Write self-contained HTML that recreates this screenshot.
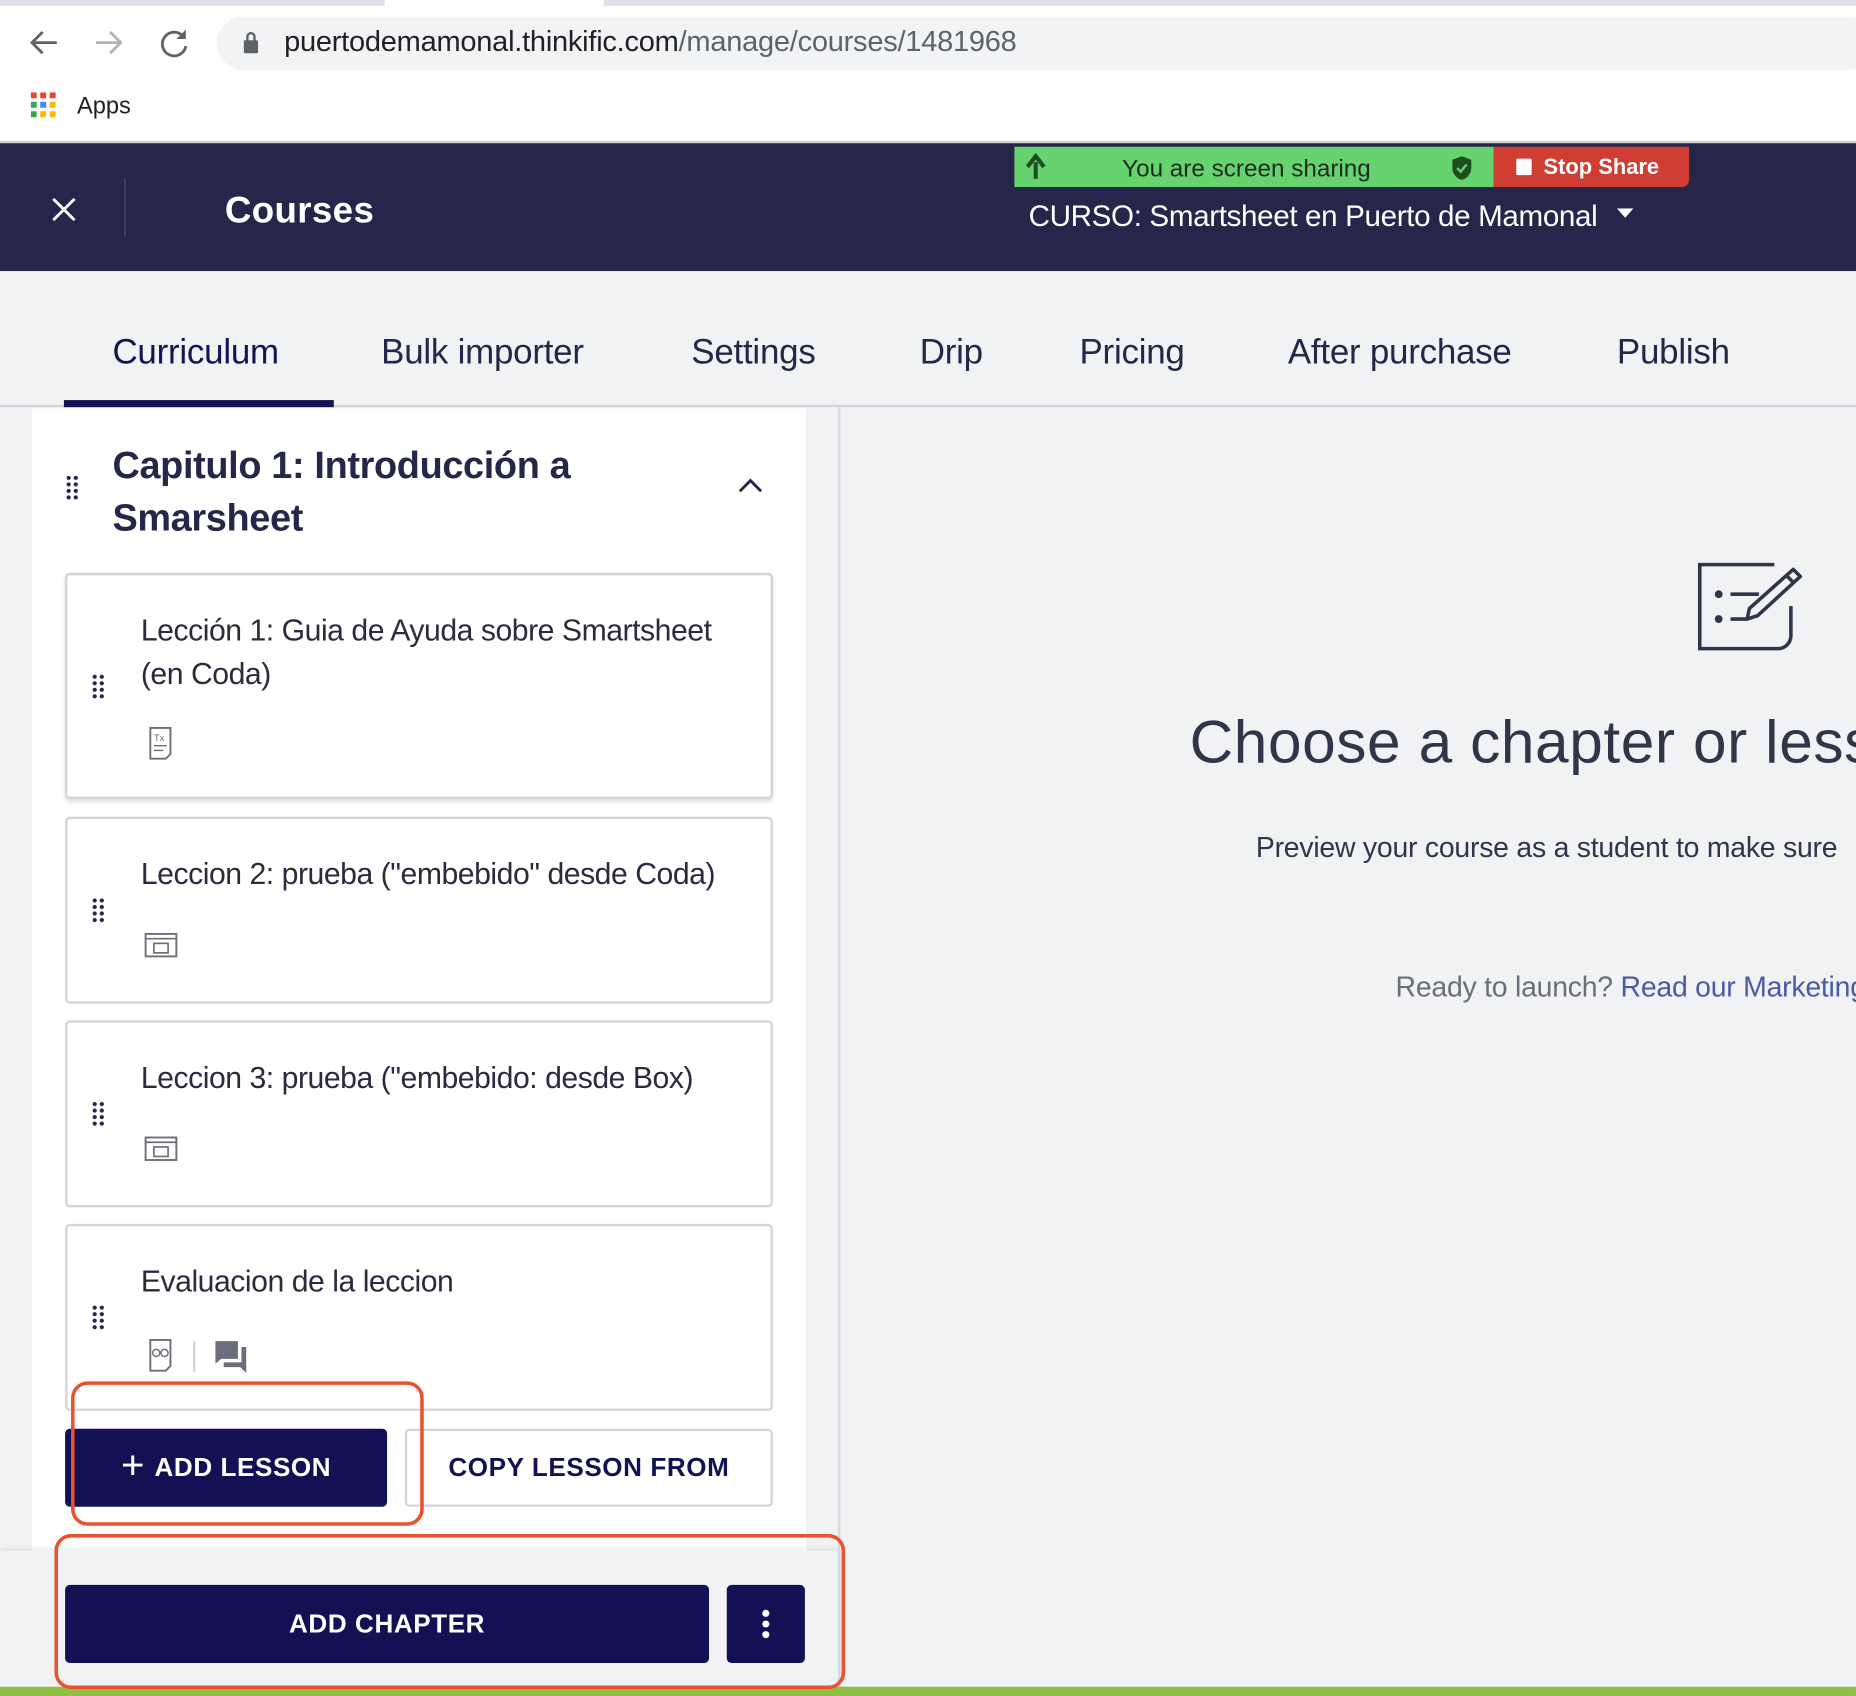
<!DOCTYPE html>
<html><head><meta charset="utf-8">
<style>
*{margin:0;padding:0;box-sizing:border-box}
html,body{width:1856px;height:1696px;overflow:hidden;background:#f1f2f4}
#s{position:absolute;left:0;top:0;width:1568px;height:1433px;transform:scale(1.18367);transform-origin:0 0;font-family:"Liberation Sans",sans-serif;background:#f1f2f4;overflow:hidden}
.a{position:absolute}
.t{position:absolute;white-space:nowrap}
.tab{position:absolute;top:281px;font-size:29.5px;color:#262649;letter-spacing:-0.2px;white-space:nowrap}
.card{position:absolute;left:55px;width:598px;background:#fff;border:2px solid #d3d5db;border-radius:4px}
.ct{position:absolute;left:62px;font-size:25.5px;color:#2b2b3e;letter-spacing:-0.4px;white-space:nowrap;line-height:37px}
.dots{position:absolute;width:12px;height:22px;background-image:radial-gradient(circle,#262649 1.6px,transparent 1.9px);background-size:6px 5.5px}
.btn{position:absolute;border-radius:4px;font-size:22px;letter-spacing:0.5px;font-weight:bold;display:flex;align-items:center;justify-content:center;white-space:nowrap}
</style></head><body><div id="s">
<div class="a" style="left:0;top:0;width:1568px;height:5px;background:#dee1e6"></div>
<div class="a" style="left:325px;top:0;width:185px;height:5px;background:#fff"></div>
<div class="a" style="left:0;top:5px;width:1568px;height:115px;background:#fff"></div>
<div class="a" style="left:183px;top:14px;width:1400px;height:45px;background:#f1f3f4;border-radius:23px"></div>
<svg class="a" style="left:20px;top:20px" width="150" height="32" viewBox="0 0 150 32">
<path d="M28 16H7M16 7l-9 9 9 9" stroke="#5f6368" stroke-width="2.4" fill="none"/>
<path d="M61 16h21M73 7l9 9-9 9" stroke="#b0b3b8" stroke-width="2.4" fill="none"/>
<path d="M135 11a10 10 0 1 0 2 8" stroke="#5f6368" stroke-width="2.4" fill="none"/><path d="M137 5v8h-8z" fill="#5f6368"/>
</svg>
<svg class="a" style="left:205px;top:26px" width="14" height="20"><rect x="1" y="8" width="12" height="11" rx="1" fill="#5f6368"/><path d="M4 9V5a3 3 0 0 1 6 0v4" stroke="#5f6368" stroke-width="2" fill="none"/></svg>
<div class="t" style="left:240px;top:22px;font-size:24.5px;color:#202124;letter-spacing:-0.2px">puertodemamonal.thinkific.com<span style="color:#5f6368">/manage/courses/1481968</span></div>
<svg class="a" style="left:26px;top:78px" width="22" height="22">
<g><rect x="0" y="0" width="5" height="5" fill="#ea4335"/><rect x="8" y="0" width="5" height="5" fill="#ea4335"/><rect x="16" y="0" width="5" height="5" fill="#ea4335"/>
<rect x="0" y="8" width="5" height="5" fill="#34a853"/><rect x="8" y="8" width="5" height="5" fill="#4285f4"/><rect x="16" y="8" width="5" height="5" fill="#fbbc05"/>
<rect x="0" y="16" width="5" height="5" fill="#34a853"/><rect x="8" y="16" width="5" height="5" fill="#fbbc05"/><rect x="16" y="16" width="5" height="5" fill="#fbbc05"/></g></svg>
<div class="t" style="left:65px;top:79px;font-size:20px;color:#202124">Apps</div>
<div class="a" style="left:0;top:119px;width:1568px;height:2px;background:#d0d0d0"></div>
<div class="a" style="left:0;top:121px;width:1568px;height:108px;background:#25264a"></div>
<svg class="a" style="left:43px;top:166px" width="22" height="22"><path d="M2 2l18 18M20 2L2 20" stroke="#fff" stroke-width="2.4"/></svg>
<div class="a" style="left:105px;top:150px;width:1px;height:50px;background:#4a4b6b"></div>
<div class="t" style="left:190px;top:160px;font-size:31px;color:#fff;font-weight:bold;letter-spacing:0.3px">Courses</div>
<div class="a" style="left:857px;top:124px;width:405px;height:34px;background:#66d36e"></div>
<div class="a" style="left:1262px;top:124px;width:165px;height:34px;background:#cf3d33;border-radius:0 0 6px 0"></div>
<svg class="a" style="left:864px;top:129px" width="24" height="24"><path d="M11 22V8M4 12l7-9 7 9" stroke="#1e4d1e" stroke-width="3.5" fill="none"/></svg>
<div class="t" style="left:948px;top:131px;font-size:20.5px;color:#1e2a1e">You are screen sharing</div>
<svg class="a" style="left:1225px;top:131px" width="20" height="22"><path d="M10 1l8 3v7c0 5-4 9-8 10C6 20 2 16 2 11V4z" fill="#1e4d1e"/><path d="M6 11l3 3 5-6" stroke="#66d36e" stroke-width="2" fill="none"/></svg>
<div class="a" style="left:1281px;top:134px;width:13px;height:14px;background:#fff;border-radius:1px"></div>
<div class="t" style="left:1304px;top:130px;font-size:18.5px;color:#fff;font-weight:bold">Stop Share</div>
<div class="t" style="left:869px;top:169px;font-size:25px;color:#fff;letter-spacing:-0.3px">CURSO: Smartsheet en Puerto de Mamonal</div>
<svg class="a" style="left:1366px;top:176px" width="14" height="9"><path d="M0 0h14L7 8z" fill="#fff"/></svg>
<div class="tab" style="left:95px;color:#141454">Curriculum</div>
<div class="tab" style="left:322px">Bulk importer</div>
<div class="tab" style="left:584px">Settings</div>
<div class="tab" style="left:777px">Drip</div>
<div class="tab" style="left:912px">Pricing</div>
<div class="tab" style="left:1088px">After purchase</div>
<div class="tab" style="left:1366px">Publish</div>
<div class="a" style="left:0;top:342px;width:1568px;height:2px;background:#d3d5db"></div>
<div class="a" style="left:54px;top:338px;width:228px;height:6px;background:#111154"></div>
<div class="a" style="left:27px;top:345px;width:654px;height:970px;background:#fff"></div>
<div class="a" style="left:708px;top:344px;width:2px;height:1090px;background:#d8dadf"></div>
<div class="dots" style="left:55px;top:401px"></div>
<div class="t" style="left:95px;top:371px;font-size:32px;line-height:44px;font-weight:bold;color:#262649;letter-spacing:-0.3px">Capitulo 1: Introducción a<br>Smarsheet</div>
<svg class="a" style="left:623px;top:403px" width="22" height="14"><path d="M2 12l9-9 9 9" stroke="#262649" stroke-width="2.4" fill="none"/></svg>

<div class="card" style="top:484px;height:191px;box-shadow:0 2px 4px rgba(0,0,0,.15)">
<div class="dots" style="left:20px;top:83px"></div>
<div class="ct" style="top:29px">Lección 1: Guia de Ayuda sobre Smartsheet<br>(en Coda)</div>
<svg class="a" style="left:68px;top:128px" width="22" height="28"><path d="M2 1h17v22l-4 4H2z" fill="none" stroke="#6b6d7b" stroke-width="1.6"/><text x="5" y="12" font-size="8" fill="#6b6d7b" font-family="Liberation Sans">Tx</text><path d="M5 16h11M5 20h8" stroke="#6b6d7b" stroke-width="1.2"/></svg>
</div>
<div class="card" style="top:690px;height:158px">
<div class="dots" style="left:20px;top:66px"></div>
<div class="ct" style="top:29px">Leccion 2: prueba ("embebido" desde Coda)</div>
<svg class="a" style="left:65px;top:96px" width="28" height="22"><rect x="1" y="1" width="26" height="19" fill="none" stroke="#6b6d7b" stroke-width="1.6"/><path d="M1 5h26" stroke="#6b6d7b" stroke-width="1.4"/><rect x="8" y="9" width="12" height="8" fill="none" stroke="#6b6d7b" stroke-width="1.4"/></svg>
</div>
<div class="card" style="top:862px;height:158px">
<div class="dots" style="left:20px;top:66px"></div>
<div class="ct" style="top:29px">Leccion 3: prueba ("embebido: desde Box)</div>
<svg class="a" style="left:65px;top:96px" width="28" height="22"><rect x="1" y="1" width="26" height="19" fill="none" stroke="#6b6d7b" stroke-width="1.6"/><path d="M1 5h26" stroke="#6b6d7b" stroke-width="1.4"/><rect x="8" y="9" width="12" height="8" fill="none" stroke="#6b6d7b" stroke-width="1.4"/></svg>
</div>
<div class="card" style="top:1034px;height:158px">
<div class="dots" style="left:20px;top:66px"></div>
<div class="ct" style="top:29px">Evaluacion de la leccion</div>
<svg class="a" style="left:68px;top:95px" width="22" height="28"><path d="M2 1h17v22l-4 4H2z" fill="none" stroke="#6b6d7b" stroke-width="1.6"/><circle cx="7" cy="12" r="3" fill="none" stroke="#6b6d7b" stroke-width="1.2"/><circle cx="14" cy="12" r="3" fill="none" stroke="#6b6d7b" stroke-width="1.2"/></svg>
<div class="a" style="left:106px;top:97px;width:2px;height:26px;background:#d3d5db"></div>
<svg class="a" style="left:124px;top:96px" width="30" height="30"><path d="M1 1h19v15H6l-5 4z" fill="#6b6d7b"/><path d="M23 6h4v22l-5-5H8v-4h15z" fill="#6b6d7b"/></svg>
</div>
<div class="btn" style="left:55px;top:1207px;width:272px;height:66px;background:#111154;color:#fff"><span style="font-size:34px;font-weight:normal;margin-right:8px;margin-top:-4px">+</span>ADD LESSON</div>
<div class="btn" style="left:342px;top:1207px;width:311px;height:66px;background:#fff;border:2px solid #d3d5db;color:#111154">COPY LESSON FROM</div>
<div class="a" style="left:0;top:1310px;width:708px;height:116px;background:#f1f2f4;box-shadow:0 -3px 4px rgba(0,0,0,.06)"></div>
<div class="btn" style="left:55px;top:1339px;width:544px;height:66px;background:#111154;color:#fff">ADD CHAPTER</div>
<div class="btn" style="left:614px;top:1339px;width:66px;height:66px;background:#111154"><svg width="8" height="26"><circle cx="4" cy="4" r="3" fill="#fff"/><circle cx="4" cy="13" r="3" fill="#fff"/><circle cx="4" cy="22" r="3" fill="#fff"/></svg></div>
<div class="a" style="left:0;top:1425px;width:1568px;height:8px;background:#8fbf45"></div>
<div class="a" style="left:60px;top:1167px;width:298px;height:122px;border:3px solid #e9522f;border-radius:14px"></div>
<div class="a" style="left:46px;top:1296px;width:668px;height:131px;border:3px solid #e9522f;border-radius:14px"></div>
<svg class="a" style="left:1434px;top:475px" width="92" height="76" viewBox="0 0 92 76">
<path d="M65 2H2v71h66a11 11 0 0 0 11-11V37" fill="none" stroke="#33344a" stroke-width="3"/>
<circle cx="18" cy="27" r="3.3" fill="#33344a"/><circle cx="18" cy="48" r="3.3" fill="#33344a"/>
<path d="M28 27h24M28 48h14" stroke="#33344a" stroke-width="3"/>
<path d="M42 48l2-9 37-33 6 6-36 33z" fill="none" stroke="#33344a" stroke-width="3" stroke-linejoin="round"/><path d="M75 11l6 6" stroke="#33344a" stroke-width="3"/>
</svg>
<div class="t" style="left:1005px;top:597px;font-size:51px;color:#33344a;letter-spacing:0.5px;font-weight:300">Choose a chapter or lesson</div>
<div class="t" style="left:1061px;top:703px;font-size:24px;color:#33344a;letter-spacing:-0.2px">Preview your course as a student to make sure</div>
<div class="t" style="left:1179px;top:821px;font-size:24px;color:#6b6d7b;letter-spacing:-0.2px">Ready to launch? <span style="color:#4a5aa8">Read our Marketing</span></div>
</div></body></html>
